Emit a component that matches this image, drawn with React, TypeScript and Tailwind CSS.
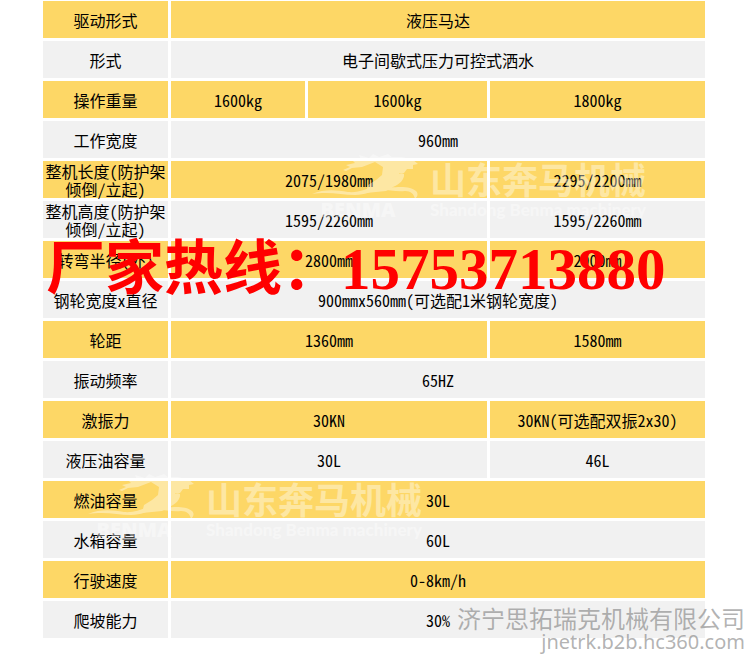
import { clsx } from 'clsx';

type Cell = { text: string; span: number };

type Row = { label: string; cells: Cell[] };

const rows: Row[] = [
  { label: '驱动形式', cells: [{ text: '液压马达', span: 3 }] },
  { label: '形式', cells: [{ text: '电子间歇式压力可控式洒水', span: 3 }] },
  {
    label: '操作重量',
    cells: [
      { text: '1600kg', span: 1 },
      { text: '1600kg', span: 1 },
      { text: '1800kg', span: 1 },
    ],
  },
  { label: '工作宽度', cells: [{ text: '960mm', span: 3 }] },
  {
    label: '整机长度(防护架倾倒/立起)',
    cells: [
      { text: '2075/1980mm', span: 2 },
      { text: '2295/2200mm', span: 1 },
    ],
  },
  {
    label: '整机高度(防护架倾倒/立起)',
    cells: [
      { text: '1595/2260mm', span: 2 },
      { text: '1595/2260mm', span: 1 },
    ],
  },
  {
    label: '转弯半径(外)',
    cells: [
      { text: '2800mm', span: 2 },
      { text: '2900mm', span: 1 },
    ],
  },
  { label: '钢轮宽度x直径', cells: [{ text: '900mmx560mm(可选配1米钢轮宽度)', span: 3 }] },
  {
    label: '轮距',
    cells: [
      { text: '1360mm', span: 2 },
      { text: '1580mm', span: 1 },
    ],
  },
  { label: '振动频率', cells: [{ text: '65HZ', span: 3 }] },
  {
    label: '激振力',
    cells: [
      { text: '30KN', span: 2 },
      { text: '30KN(可选配双振2x30)', span: 1 },
    ],
  },
  {
    label: '液压油容量',
    cells: [
      { text: '30L', span: 2 },
      { text: '46L', span: 1 },
    ],
  },
  { label: '燃油容量', cells: [{ text: '30L', span: 3 }] },
  { label: '水箱容量', cells: [{ text: '60L', span: 3 }] },
  { label: '行驶速度', cells: [{ text: '0-8km/h', span: 3 }] },
  { label: '爬坡能力', cells: [{ text: '30%', span: 3 }] },
];

function HorseLogo() {
  return (
    <svg viewBox="0 0 112 50" className="h-[50px] w-[112px]" fill="currentColor" aria-hidden="true">
      {/* mane and head */}
      <path d="M33 20l7-3-4-2 9-2-4-4 10 1-2-5 10 3 4-4 6 3 9-3 4 3 9 0 11 2 6 5-5 1 0 4-6 0-3 4-5 0 1 4-7 6-1 5-6 3-10 1-10 1 2-8 8-5 6-5 1-8-8-5-13 5-10 1-6 3z" />
      {/* raised foreleg */}
      <path d="M83 25c5-1 9-3 11-1 1 5-5 11-11 13l-9 1c5-3 9-7 9-13z" />
      {/* ground swoosh */}
      <path d="M2 44c12-5 24-4 36-2 12 1 18-4 28-5 8-1 14 1 22 0 7 0 13 0 18 4 3 3 1 6-1 8-1-5-4-8-10-8-10 1-19-2-27-1-8 1-12 5-23 5-14 0-25-4-43-1z" />
    </svg>
  );
}

function Watermark({ className }: { className: string }) {
  return (
    <div className={clsx('pointer-events-none absolute flex text-white opacity-40', className)}>
      <div className="w-[112px]">
        <HorseLogo />
        <div className="pr-4 text-center font-['Open_Sans',sans-serif] text-xl leading-5 font-extrabold">BENMA</div>
      </div>
      <div className="pt-2.5 pl-2">
        <div className="font-['Noto_Sans_CJK_SC',sans-serif] text-4xl leading-9 font-bold">山东奔马机械</div>
        <div className="pt-1 font-['Lato',sans-serif] text-[17px] leading-5 font-black">Shandong Benma machinery</div>
      </div>
    </div>
  );
}

export default function App() {
  return (
    <div className="relative bg-white pr-[42px] pb-[13px] pl-10">
      {/* Spec table */}
      <table className="-mt-0.5 w-full table-fixed border-separate border-spacing-[3px] text-center font-['Noto_Sans_Mono_CJK_SC','DejaVu_Sans_Mono','Noto_Sans_CJK_SC',monospace] text-base leading-[18px] text-black">
        <colgroup>
          <col className="w-[125px]" />
          <col className="w-[134px]" />
          <col className="w-[179px]" />
          <col />
        </colgroup>
        <tbody>
          {rows.map((row, i) => (
            <tr key={row.label} className={clsx('h-[37px]', i % 2 === 0 ? 'bg-[#fdd766]' : 'bg-[#f1f1f1]')}>
              <th scope="row" className="p-0 font-normal">
                {row.label}
              </th>
              {row.cells.map((cell, j) => (
                <td key={j} colSpan={cell.span} className="p-0">
                  {cell.text}
                </td>
              ))}
            </tr>
          ))}
        </tbody>
      </table>

      <Watermark className="top-[152px] left-[310px]" />
      <Watermark className="top-[472px] left-[86px]" />

      {/* Hotline */}
      <p className="absolute top-[241px] left-[46px] font-['Liberation_Serif','Noto_Sans_CJK_SC',serif] text-[59px] leading-[60px] font-bold whitespace-nowrap text-[#ff0000]">
        厂家热线：15753713880
      </p>

      {/* Company stamp */}
      <div className="absolute right-[5px] bottom-0 text-right text-[#808080]/60">
        <div className="font-['Noto_Sans_CJK_SC',sans-serif] text-2xl leading-6">济宁思拓瑞克机械有限公司</div>
        <div className="font-['Noto_Sans',sans-serif] text-xl leading-6">jnetrk.b2b.hc360.com</div>
      </div>
    </div>
  );
}
